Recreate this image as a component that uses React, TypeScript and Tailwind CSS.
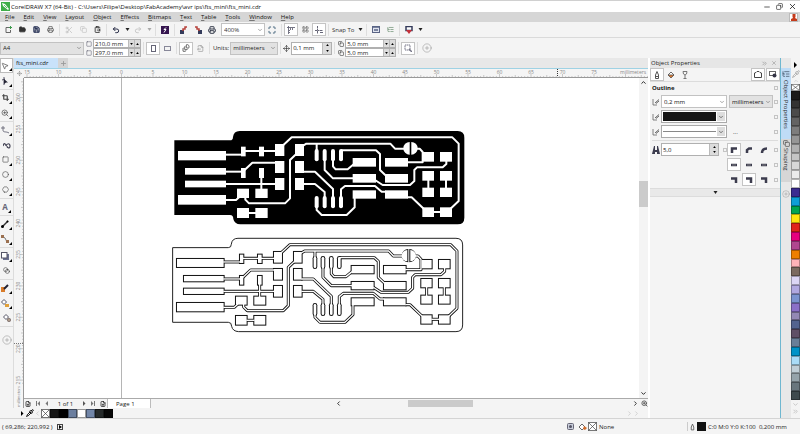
import type { ReactNode } from 'react';
import clsx from 'clsx';
import {
  Blend,
  ChevronDown,
  ChevronRight,
  ChevronUp,
  ChevronsRight,
  Circle,
  CirclePlus,
  ClipboardPaste,
  Copy,
  Crop,
  FileOutput,
  FilePlus,
  FileStack,
  FolderOpen,
  Hexagon,
  LayoutGrid,
  ListTree,
  Maximize,
  Minus,
  MousePointer2,
  Move,
  PaintBucket,
  Pipette,
  Plus,
  Printer,
  Redo2,
  Save,
  Scissors,
  Square,
  Undo2,
  X,
  ZoomIn,
} from 'lucide-react';

const menus = ['File', 'Edit', 'View', 'Layout', 'Object', 'Effects', 'Bitmaps', 'Text', 'Table', 'Tools', 'Window', 'Help'];

const palette = [
  '#1a1a1a', '#333333', '#4b4b4b', '#636363', '#7d7d7d', '#969696', '#b0b0b0', '#c5c5c5', '#d8d8d8', '#ebebeb', '#ffffff',
  '#3b2c91', '#0e9fd8', '#00a551', '#fde60f', '#e0251b', '#e6007e', '#b0468f', '#ee7f00', '#ffb3b8', '#7b6a60', '#dcd6f5',
  '#b0a8e0', '#7b93cf', '#8a70c8', '#9388b5', '#53648f', '#5f4f66', '#6a7f98', '#0093c8', '#aadcf7', '#c0ced6', '#95a3aa',
  '#69767d', '#3f4a4d',
];

const docColors = ['#151515', '#000000', '#6c7f9f', '#ffffff', '#7286a8', '#262a2a', '#080808'];

// x, y, width, height
const pads = [
  [39, 93, 144, 28], [60, 144, 123, 20], [60, 182, 123, 20], [39, 225, 144, 29],
  [228, 80, 14, 29], [282, 80, 15, 29], [228, 144, 14, 30], [282, 144, 15, 30],
  [330, 72, 28, 36], [330, 123, 28, 36], [330, 174, 28, 36],
  [390, 72, 27, 36], [390, 123, 27, 36], [390, 174, 27, 36],
  [216, 206, 36, 28], [271, 206, 37, 28], [216, 264, 36, 30], [271, 264, 37, 30],
  [563, 114, 70, 26], [660, 114, 69, 26], [563, 162, 70, 26], [660, 162, 69, 26], [563, 211, 70, 25], [660, 211, 69, 25],
  [773, 96, 34, 29], [825, 96, 36, 29], [772, 153, 35, 29], [825, 153, 36, 29],
  [772, 203, 35, 28], [825, 203, 36, 28], [772, 262, 35, 29], [825, 262, 36, 29],
];

const pins = [
  [455, 87], [479, 87], [504, 87], [528, 87],
  [455, 228], [479, 228], [504, 228], [528, 228],
];

const tracks = [
  '180,104 232,104', '238,93 333,93', '180,155 231,155', '238,151 262,128 333,128', '180,192 333,192',
  '289,170 289,210', '180,240 213,240 224,230', '241,230 241,239 252,250 360,250 375,235 375,120 393,103',
  '249,279 274,279', '352,78 380,52 862,52 881,71 881,243 855,268',
  '413,78 424,71 676,71 690,86 720,86', '754,86 764,86 773,96 773,127 726,127', '455,71 455,95',
  '479,116 479,150 504,175 566,175', '504,116 504,139 512,148 548,148 566,133',
  '528,91 633,91 645,102 645,150 663,167', '414,155 450,155 504,207 504,235', '414,192 450,192 479,216 479,235',
  '455,255 455,270 470,285 545,285 569,262 569,233', '528,235 528,208 540,198 630,198 650,215 663,215',
  '630,180 653,195 735,195 748,183 748,150 756,142 833,142 844,132 844,122',
  '726,232 740,232 776,266', '790,179 790,206', '843,179 843,206', '804,276 828,276',
];

const boardOutline =
  'M28 61H195Q204 61 204 51Q206 33 224 33H878Q898 33 898 53V293Q898 313 878 313H226Q208 312 205 297Q205 285 195 285H28Z';

// inset shrinks the pads, a negative one makes them larger
function Copper({ color, inset, trackWidth }: { color: string; inset: number; trackWidth: number }) {
  const jumper = 19 - inset;
  return (
    <g fill={color}>
      {pads.map(([x, y, w, h]) => (
        <rect key={`${x}-${y}`} x={x + inset} y={y + inset} width={w - inset * 2} height={h - inset * 2} />
      ))}
      {pins.map(([x, y]) => (
        <rect
          key={`${x}-${y}`}
          x={x - 6 + inset}
          y={y + inset}
          width={12 - inset * 2}
          height={37 - inset * 2}
          rx={6 - inset}
        />
      ))}
      <path d={`M${734 - inset} ${85 - jumper}v${jumper * 2}a${jumper} ${jumper} 0 0 1 0 ${-jumper * 2}Z`} />
      <path d={`M${739 + inset} ${85 - jumper}v${jumper * 2}a${jumper} ${jumper} 0 0 0 0 ${-jumper * 2}Z`} />
      <g fill="none" stroke={color} strokeWidth={trackWidth} strokeLinejoin="round">
        {tracks.map((points) => (
          <polyline key={points} points={points} />
        ))}
      </g>
    </g>
  );
}

function Drawing() {
  return (
    <svg className="block h-full w-full" role="img" aria-label="USB board drawing">
      <g transform="translate(-24 -78)">
        <line x1="121.5" y1="78" x2="121.5" y2="398" stroke="#b5b5b5" />
        <g transform="translate(165 120) scale(0.33333)">
          <path d={boardOutline} />
          <Copper color="#ffffff" inset={0} trackWidth={6} />
        </g>
        <g transform="translate(163.3 227.300) scale(0.33333)">
          <path d={boardOutline} fill="#fff" stroke="#222" strokeWidth="3" />
          <Copper color="#111111" inset={-1} trackWidth={9} />
          <Copper color="#ffffff" inset={2} trackWidth={4} />
        </g>
      </g>
    </svg>
  );
}

function HorizontalRuler() {
  const ticks = Array.from({ length: 200 }, (_, i) => i - 30);
  return (
    <svg className="h-full min-w-0 flex-1 bg-[#f5f5f5] font-['Open_Sans',sans-serif]" aria-hidden="true">
      <g transform="translate(-24 -69)">
        {ticks.map((i) => (
          <line
            key={i}
            x1={121.5 + i * 3.15}
            x2={121.5 + i * 3.15}
            y1={i % 10 === 0 ? 74 : i % 5 === 0 ? 75 : 76}
            y2="78"
            stroke="#b4b4b4"
            strokeWidth="0.700"
          />
        ))}
        {ticks.filter((i) => i % 10 === 0 && i <= 150).map((i) => (
          <text key={i} x={121.5 + i * 3.15} y="74" fontSize="5" fill="#888" textAnchor="middle">
            {Math.abs(i / 2)}
          </text>
        ))}
        <text x="620" y="74" fontSize="5" fill="#888">millimeters</text>
        <line x1="557.5" x2="557.5" y1="69" y2="78" stroke="#333" strokeDasharray="1 1" />
        <line x1="24" x2="2000" y1="77.5" y2="77.5" stroke="#999" />
      </g>
    </svg>
  );
}

function VerticalRuler() {
  const ticks = Array.from({ length: 97 }, (_, i) => i - 5);
  return (
    <svg className="h-full w-[10px] shrink-0 bg-[#f5f5f5] font-['Open_Sans',sans-serif]" aria-hidden="true">
      <g transform="translate(-14 -78)">
        {ticks.map((i) => (
          <line
            key={i}
            y1={97.5 + i * 3.14}
            y2={97.5 + i * 3.14}
            x1={i % 10 === 0 ? 20 : i % 5 === 0 ? 21 : 22}
            x2="24"
            stroke="#b4b4b4"
            strokeWidth="0.700"
          />
        ))}
        {ticks.filter((i) => i % 10 === 0 && i >= 0).map((i) => (
          <text key={i} transform={`translate(20 ${97.5 + i * 3.14}) rotate(-90)`} fontSize="5" fill="#888" textAnchor="middle">
            {260 - i / 2}
          </text>
        ))}
        <text transform="translate(20 407) rotate(-90)" fontSize="4" fill="#888">millimeters</text>
        <line x1="14" x2="24" y1="343.5" y2="343.5" stroke="#777" strokeDasharray="1 1" />
        <line x1="23.5" x2="23.5" y1="78" y2="2000" stroke="#999" />
      </g>
    </svg>
  );
}

function Divider() {
  return <span className="mx-[2px] h-3 w-px shrink-0 bg-[#dedede]" />;
}

function Tool({ label, children, active }: { label: string; children: ReactNode; active?: boolean }) {
  return (
    <button
      aria-label={label}
      className={clsx(
        'flex h-[13px] w-[14px] shrink-0 items-center justify-center',
        active && 'border border-[#c4c4c4] bg-white',
      )}
    >
      {children}
    </button>
  );
}

function Caret({ faded }: { faded?: boolean }) {
  return (
    <span className="flex w-2 shrink-0 justify-center">
      <svg width="5" height="3" viewBox="0 0 5 3"><path d="M0.500 0H4.500L2.500 3Z" fill={faded ? '#aaa' : '#222'} /></svg>
    </span>
  );
}

function Dropdown({ label, value, className }: { label: string; value: string; className: string }) {
  return (
    <span className={clsx('flex h-[13px] shrink-0 items-center border border-[#c2c2c2]', className)}>
      <select aria-label={label} defaultValue={value} className="h-full min-w-0 flex-1 appearance-none pl-[2px] outline-none">
        <option>{value}</option>
      </select>
      <ChevronDown size={6} className="mr-px shrink-0 text-[#555]" />
    </span>
  );
}

function Spin({ label, value, className, wide }: { label: string; value: string; className: string; wide?: boolean }) {
  return (
    <span className={clsx('flex shrink-0 border border-[#b0b0b0] bg-white', className)}>
      <input aria-label={label} defaultValue={value} className="min-w-0 flex-1 pl-px outline-none" />
      <span className={clsx('flex bg-[#dcdcdc]', wide ? 'w-[9px] flex-col' : 'w-3')}>
        <button aria-label={`${label} down`} className="flex flex-1 items-center justify-center border-l border-[#bbb]">
          <svg width="3" height="2" viewBox="0 0 4 3"><path d={wide ? 'M0 3H4L2 0Z' : 'M0 0H4L2 3Z'} /></svg>
        </button>
        <button aria-label={`${label} up`} className="flex flex-1 items-center justify-center border-l border-[#bbb]">
          <svg width="3" height="2" viewBox="0 0 4 3"><path d={wide ? 'M0 0H4L2 3Z' : 'M0 3H4L2 0Z'} /></svg>
        </button>
      </span>
    </span>
  );
}

function TitleBar() {
  return (
    <header className="flex h-3 shrink-0 items-center border-t border-[#d0d0d0] bg-white">
      <svg width="9" height="9" viewBox="0 0 9 9" className="ml-px shrink-0">
        <rect width="9" height="9" fill="#3fae49" />
        <path d="M1 1L4 2L8 7L7 8L2 4Z" fill="#fff" />
        <path d="M3 3L6 6" stroke="#3fae49" strokeWidth="0.800" />
      </svg>
      <h1 className="ml-px flex-1 truncate">
        CorelDRAW X7 (64-Bit) - C:\Users\Filipe\Desktop\FabAcademy\avr ips\fts_mini\fts_mini.cdr
      </h1>
      <div className="flex items-center gap-[5px] pr-[3px]">
        <button aria-label="Minimize"><Minus size={8} /></button>
        <button aria-label="Restore"><Copy size={7} className="rotate-90" /></button>
        <button aria-label="Close"><X size={9} /></button>
      </div>
    </header>
  );
}

function MenuBar() {
  return (
    <nav className="flex h-[10px] shrink-0 items-center gap-px bg-[#d6d6d6] pl-px">
      {menus.map((menu) => (
        <button key={menu} className="px-1">
          <span className="underline decoration-[#777]">{menu[0]}</span>
          {menu.slice(1)}
        </button>
      ))}
      <button aria-label="Account" className="mr-[2px] ml-auto flex h-[9px] w-[9px] justify-center border border-[#bbb] bg-white">
        <svg width="6" height="7" viewBox="0 0 6 7"><path d="M1.500 0H4.500V3L4 4L6 5V7H0V5L2 4L1.500 3Z" fill="#c53b1c" /></svg>
      </button>
    </nav>
  );
}

function StandardBar() {
  return (
    <div className="flex h-[15px] shrink-0 items-center bg-[#f4f4f4] pl-px text-[#333]">
      <Tool label="New">
        <svg width="7" height="7" viewBox="0 0 7 7" fill="none"><path d="M4 1.500H1V6.500H5.500V4" stroke="#666" /><path d="M5.500 0V3M4 1.500H7" stroke="#3c9a4c" /></svg>
      </Tool>
      <Tool label="Open"><FolderOpen size={7} fill="#333" strokeWidth={3} /></Tool>
      <Tool label="Save"><Save size={7} className="text-[#2b3558]" strokeWidth={4} /></Tool>
      <Tool label="Print"><Printer size={7} /></Tool>
      <Divider />
      <Tool label="Cut"><Scissors size={8} className="text-[#bbb]" /></Tool>
      <Tool label="Copy"><Copy size={7} className="text-[#bbb]" /></Tool>
      <Tool label="Paste"><ClipboardPaste size={7} strokeWidth={3} /></Tool>
      <Divider />
      <Tool label="Undo"><Undo2 size={8} strokeWidth={3} className="text-[#262b45]" /></Tool>
      <Caret />
      <Tool label="Redo"><Redo2 size={8} className="text-[#b5b5b5]" /></Tool>
      <Caret faded />
      <Divider />
      <Tool label="Search content">
        <svg width="8" height="8" viewBox="0 0 8 8">
          <rect width="8" height="8" fill="#35154f" />
          <path d="M5 1.500L3 3.500H5L3 6.500" stroke="#fff" fill="none" />
        </svg>
      </Tool>
      <Divider />
      <Tool label="Import">
        <svg width="8" height="8" viewBox="0 0 8 8"><path d="M0 4H4V8H0Z" fill="#343b5b" /><path d="M7 1H5V3H3V5" stroke="#b5403a" strokeWidth="1.500" fill="none" /></svg>
      </Tool>
      <Tool label="Export">
        <svg width="8" height="8" viewBox="0 0 8 8"><path d="M4 4H8V8H4Z" fill="#343b5b" /><path d="M1 1H3V3H5V5" stroke="#b5403a" strokeWidth="1.500" fill="none" /></svg>
      </Tool>
      <Tool label="Publish to PDF"><Printer size={8} strokeWidth={3} className="text-[#3b4050]" /></Tool>
      <Dropdown label="Zoom level" value="400%" className="ml-[2px] w-11 bg-white" />
      <Tool label="Full-screen preview"><Maximize size={8} strokeWidth={3} className="text-[#42637b]" /></Tool>
      <Divider />
      <Tool label="Show rulers" active>
        <svg width="8" height="8" viewBox="0 0 8 8" fill="none" stroke="#667"><path d="M0 1.500H8M1.500 0V8M3.500 2V4M5.500 2V4M2 4.500H3M2 6.500H3" strokeWidth="0.900" /></svg>
      </Tool>
      <Tool label="Show grid"><LayoutGrid size={7} className="text-[#555]" /></Tool>
      <Tool label="Show guidelines" active>
        <svg width="8" height="8" viewBox="0 0 8 8" fill="none" stroke="#667"><path d="M2.500 0V8M0 4.500H8" strokeDasharray="2 0.500" /><path d="M5 6.500H8" /></svg>
      </Tool>
      <Divider />
      <button className="ml-px flex items-center gap-[2px] whitespace-nowrap">Snap To<Caret /></button>
      <Divider />
      <Tool label="Options">
        <svg width="8" height="7" viewBox="0 0 8 7"><rect x="0.500" y="0.500" width="7" height="6" fill="#dfe3ee" stroke="#5a6485" /><path d="M0 1H8M2 4H6" stroke="#5a6485" strokeWidth="1.500" /></svg>
      </Tool>
      <Tool label="Object manager"><ListTree size={7} className="text-[#4d7a57]" /></Tool>
      <Divider />
      <Tool label="Launcher">
        <svg width="8" height="8" viewBox="0 0 8 8"><rect x="1" y="0.500" width="6" height="4" fill="#fff" stroke="#343b5b" strokeWidth="1.500" /><path d="M1 4H7L4 8Z" fill="#c5303a" /></svg>
      </Tool>
      <Caret />
    </div>
  );
}

function PropertyBar() {
  return (
    <div className="flex h-[21px] shrink-0 items-center border-t border-[#dadada] bg-[#f4f4f4] text-[#222]">
      <Dropdown label="Page size" value="A4" className="w-[84px] bg-[#e2e2e2]" />
      <div className="ml-[2px] flex flex-col gap-[3px] text-[#556]">
        <Square size={6} />
        <Square size={6} />
      </div>
      <div className="ml-px flex flex-col">
        <Spin label="Page width" value="210,0 mm" className="h-[9px] w-12" />
        <Spin label="Page height" value="297,0 mm" className="h-[9px] w-12" />
      </div>
      <Divider />
      <Tool label="Portrait" active><span className="h-[7px] w-[5px] border border-[#667]" /></Tool>
      <Tool label="Landscape"><span className="h-[5px] w-[7px] border border-[#889]" /></Tool>
      <Divider />
      <Tool label="All pages" active><FileStack size={8} /></Tool>
      <Tool label="Current page"><FileOutput size={7} className="text-[#888]" /></Tool>
      <Divider />
      <span className="ml-px">Units:</span>
      <Dropdown label="Units" value="millimeters" className="ml-px w-12 bg-[#e2e2e2]" />
      <Divider />
      <Move size={7} className="shrink-0" />
      <Spin label="Nudge distance" value="0,1 mm" className="ml-px h-[13px] w-[41px]" wide />
      <Divider />
      <div className="ml-px flex flex-col gap-[3px]">
        <Copy size={6} />
        <Copy size={6} />
      </div>
      <div className="ml-px flex flex-col">
        <Spin label="Duplicate distance x" value="5,0 mm" className="h-[9px] w-[51px]" />
        <Spin label="Duplicate distance y" value="5,0 mm" className="h-[9px] w-[51px]" />
      </div>
      <Divider />
      <Tool label="Treat as filled" active>
        <svg width="8" height="8" viewBox="0 0 8 8" fill="none" stroke="#778"><rect x="1" y="1" width="5" height="5" strokeDasharray="1.500 0.500" /><path d="M5 5L8 8" strokeWidth="1.500" /></svg>
      </Tool>
      <Divider />
      <Tool label="Customize"><CirclePlus size={10} strokeWidth={1} className="text-[#777]" /></Tool>
    </div>
  );
}

type ToolItem = { label: string; icon: ReactNode; single?: boolean };

const toolGroups: ToolItem[][] = [
  [
    { label: 'Pick', icon: <MousePointer2 size={8} /> },
    {
      label: 'Shape',
      icon: <svg width="8" height="8" viewBox="0 0 8 8"><path d="M3 0V8M1 3L4 2" stroke="#556" fill="none" /><path d="M3 2L7 5.500H5L3 7Z" fill="#223" /></svg>,
    },
  ],
  [
    { label: 'Crop', icon: <Crop size={7} strokeWidth={4} /> },
    { label: 'Zoom', icon: <ZoomIn size={8} /> },
  ],
  [
    {
      label: 'Freehand',
      icon: <svg width="8" height="8" viewBox="0 0 8 8" fill="none" stroke="#667"><path d="M0 2H4M2 0V4M2 4C2 7 5 5 8 7" strokeWidth="0.900" /></svg>,
    },
    {
      label: 'Artistic media',
      single: true,
      icon: <svg width="8" height="8" viewBox="0 0 8 8" fill="none" stroke="#445"><path d="M0 5C1 1 3 3 3 5M3 5C4 2 7 2 7 5S4 7 4 5" strokeWidth="1.200" /></svg>,
    },
    { label: 'Rectangle', icon: <Square size={7} /> },
    { label: 'Ellipse', icon: <Circle size={7} /> },
    { label: 'Polygon', icon: <Hexagon size={7} className="rotate-90" /> },
  ],
  [{ label: 'Text', icon: <span className="text-[8px] font-bold text-[#667]">A</span> }],
  [
    {
      label: 'Dimension',
      icon: <svg width="8" height="8" viewBox="0 0 8 8"><path d="M1 7L7 1" stroke="#333" strokeWidth="1.500" /><circle cx="1.500" cy="6.500" r="1.500" /><circle cx="6.500" cy="1.500" r="1" /></svg>,
    },
    {
      label: 'Connector',
      icon: <svg width="8" height="8" viewBox="0 0 8 8"><path d="M1.500 1.500L4 3L6 7" stroke="#777" fill="none" /><path d="M0 0H3V3H0ZM5 5H8V8H5Z" fill="#9b7050" /></svg>,
    },
  ],
  [
    {
      label: 'Drop shadow',
      icon: <svg width="8" height="8" viewBox="0 0 8 8"><path d="M2 2H8V8H2Z" fill="#6b7190" /><rect x="0.500" y="0.500" width="5.500" height="5.500" fill="#fff" stroke="#556" /></svg>,
    },
    { label: 'Transparency', single: true, icon: <Blend size={7} /> },
  ],
  [
    {
      label: 'Eyedropper',
      icon: <svg width="8" height="8" viewBox="0 0 8 8"><path d="M0 3H4V8H0Z" fill="#d87b2a" /><path d="M3 5L7 1" stroke="#223" strokeWidth="2" /></svg>,
    },
    {
      label: 'Interactive fill',
      icon: <svg width="8" height="8" viewBox="0 0 8 8"><path d="M0.500 3L3 0.500L5.500 3L3 5.500Z" fill="#fff" stroke="#556" /><path d="M4 5H8V8H4Z" fill="#e0a03a" /></svg>,
    },
    {
      label: 'Smart fill',
      single: true,
      icon: <svg width="8" height="8" viewBox="0 0 8 8"><path d="M0.500 3L3 0.500L5.500 3L3 5.500Z" fill="#fff" stroke="#556" /><circle cx="6" cy="6" r="1.700" fill="#a98" stroke="#655" strokeWidth="0.600" /></svg>,
    },
  ],
];

function Toolbox() {
  return (
    <aside className="flex w-[14px] shrink-0 flex-col items-center border-r border-[#dcdcdc] bg-[#f4f4f4] text-[#444]">
      {toolGroups.map((group, g) => (
        <div key={g} className="flex w-full flex-col border-b border-[#dcdcdc] pb-px">
          {group.map((tool) => (
            <button
              key={tool.label}
              aria-label={tool.label}
              className={clsx(
                'flex h-[15px] w-full items-center justify-center',
                tool.label === 'Pick' && 'border border-[#bbb] bg-white',
              )}
            >
              {tool.icon}
              {!tool.single && (
                <svg width="3" height="3" viewBox="0 0 3 3" className="mb-px shrink-0 self-end">
                  <path d="M3 0V3H0Z" />
                </svg>
              )}
            </button>
          ))}
        </div>
      ))}
      <button aria-label="Add tools" className="mt-2">
        <CirclePlus size={10} strokeWidth={1} className="text-[#777]" />
      </button>
    </aside>
  );
}

function PageBar() {
  return (
    <div className="flex h-[10px] shrink-0 items-center border-t border-[#aaa] bg-[#f4f4f4] text-[#222]">
      <div className="flex w-[83px] shrink-0 items-center justify-between px-px">
        <button aria-label="Add page before"><FilePlus size={6} strokeWidth={3} /></button>
        <button aria-label="First page" className="flex text-[#777]">
          <svg width="5" height="5" viewBox="0 0 5 5"><path d="M0 0H1V5H0ZM4 0V5L1.500 2.500Z" fill="currentColor" /></svg>
        </button>
        <button aria-label="Previous page" className="flex">
          <svg width="4" height="5" viewBox="0 0 4 5"><path d="M3 0V5L0.500 2.500Z" fill="#777" /></svg>
        </button>
        <span className="px-1">1 of 1</span>
        <button aria-label="Next page" className="flex">
          <svg width="4" height="5" viewBox="0 0 4 5"><path d="M1 0V5L3.500 2.500Z" fill="#555" /></svg>
        </button>
        <button aria-label="Last page" className="flex text-[#777]">
          <svg width="5" height="5" viewBox="0 0 5 5"><path d="M4 0H5V5H4ZM1 0V5L3.500 2.500Z" fill="currentColor" /></svg>
        </button>
        <button aria-label="Add page after"><FilePlus size={6} strokeWidth={3} /></button>
      </div>
      <button className="h-full w-11 shrink-0 border-x border-[#bbb] bg-white pl-2 text-left">Page 1</button>
      <div className="ml-auto flex h-full w-[313px] items-center">
        <button aria-label="Scroll left"><ChevronRight size={7} strokeWidth={3} className="rotate-180" /></button>
        <div className="flex h-full flex-1">
          <span className="flex-[66]" />
          <span className="my-px flex-[64] bg-[#cbcbcb]" />
          <span className="flex-[158]" />
        </div>
        <button aria-label="Scroll right"><ChevronRight size={7} strokeWidth={3} /></button>
        <button aria-label="Navigator" className="ml-[2px]"><ZoomIn size={7} strokeWidth={3} className="text-[#555]" /></button>
      </div>
    </div>
  );
}

function Document() {
  return (
    <section className="flex min-w-0 flex-1 flex-col">
      <div className="flex h-[10px] shrink-0 bg-[#e8e8e8]">
        <button className="w-11 bg-[#c9e2fa] pl-[2px] text-left whitespace-nowrap">fts_mini.cdr</button>
        <button aria-label="New document" className="flex w-[10px] items-center justify-center bg-[#d4d4d4] text-[#999]">
          <Plus size={7} strokeWidth={3} />
        </button>
      </div>
      <div className="flex h-[10px] shrink-0 border-t border-[#9fd2e4]">
        <span className="flex w-[10px] items-center justify-center bg-[#f5f5f5] text-[#777]">
          <Move size={5} />
        </span>
        <HorizontalRuler />
      </div>
      <div className="flex min-h-0 flex-1">
        <VerticalRuler />
        <div className="flex min-w-0 flex-1 flex-col">
          <div className="flex min-h-0 flex-1">
            <div className="min-w-0 flex-1 bg-white">
              <Drawing />
            </div>
            <div className="flex w-[9px] shrink-0 flex-col items-center bg-[#f4f4f4]">
              <button aria-label="Scroll up" className="flex h-[9px] items-center"><ChevronUp size={7} strokeWidth={3} /></button>
              <div className="flex w-full flex-1 flex-col">
                <span className="flex-[94]" />
                <span className="flex-[26] bg-[#cbcbcb]" />
                <span className="flex-[182]" />
              </div>
              <button aria-label="Scroll down" className="flex h-[9px] items-center"><ChevronDown size={7} strokeWidth={3} /></button>
            </div>
          </div>
          <PageBar />
        </div>
      </div>
    </section>
  );
}

function NoColor({ className }: { className: string }) {
  return (
    <svg viewBox="0 0 9 9" preserveAspectRatio="none" className={className}>
      <rect x="0.500" y="0.500" width="8" height="8" fill="#fff" stroke="#777" />
      <path d="M0.500 0.500L8.500 8.500M8.500 0.500L0.500 8.500" stroke="#444" strokeWidth="0.700" />
    </svg>
  );
}

function DocumentPalette() {
  return (
    <div className="flex h-[10px] shrink-0 items-center bg-[#f4f4f4] pl-5">
      <svg width="4" height="5" viewBox="0 0 4 5"><path d="M1 0V5L3.500 2.500Z" /></svg>
      <Pipette size={8} strokeWidth={3} className="ml-[2px]" />
      <ChevronRight size={7} className="rotate-180 text-[#bbb]" />
      <NoColor className="h-[9px] w-[9px]" />
      {docColors.map((color) => (
        <button key={color} aria-label={color} className="h-[9px] w-[9px] border border-black/40" style={{ backgroundColor: color }} />
      ))}
      <span className="ml-auto flex pr-2 text-[#bbb]">
        <ChevronRight size={7} />
        <ChevronRight size={7} />
      </span>
    </div>
  );
}

function Lock({ className = 'ml-auto' }: { className?: string }) {
  return <span className={clsx('h-1 w-1 shrink-0 border border-[#c4c4c4]', className)} />;
}

function PenIcon() {
  return (
    <svg width="8" height="8" viewBox="0 0 8 8" className="mr-px shrink-0" fill="none" stroke="#666">
      <path d="M1 1V7H5" strokeWidth="0.800" />
      <path d="M3 5L7 1.500M4 5.500L7 3" />
    </svg>
  );
}

const joins = [
  { label: 'Corner', paths: ['M2 7V2.500H7', 'M2 7V4L4 2.500H7', 'M2 7C2 4 4 2.500 7 2.500'] },
  { label: 'Cap', paths: ['M1 4H7', 'M1 4H7', 'M1 4H7'] },
  { label: 'Position', paths: ['M1 2.500H6V7', 'M1 2.500H6V7', 'M1 2.500H6V7'] },
];

function JoinRow({ row, active }: { row: number; active: number }) {
  return (
    <div className="ml-auto flex items-center gap-px">
      {joins[row].paths.map((d, i) => (
        <Tool key={i} label={`${joins[row].label} ${i + 1}`} active={i === active}>
          <svg width="8" height="8" viewBox="0 0 8 8" fill="none">
            <path d={d} stroke="#3c3c4e" strokeWidth="2.500" />
            {row === 1 && <path d="M2 4H6" stroke="#aaa" strokeWidth="0.600" />}
          </svg>
        </Tool>
      ))}
      <Lock className="ml-[2px]" />
    </div>
  );
}

function ObjectProperties() {
  return (
    <section className="ml-[2px] flex w-[130px] shrink-0 flex-col bg-[#f4f4f4]">
      <div className="flex h-[10px] shrink-0 items-center bg-[#e6e6e6] pl-px">
        <h2 className="flex-1 text-[#222]">Object Properties</h2>
        <button aria-label="Collapse docker"><ChevronsRight size={7} className="text-[#888]" /></button>
        <button aria-label="Close docker" className="mx-[3px]"><X size={6} className="text-[#888]" /></button>
      </div>
      <div className="flex h-[14px] shrink-0 items-center border-b border-[#dcdcdc]">
        <Tool label="Outline" active>
          <svg width="6" height="8" viewBox="0 0 6 8" fill="none" stroke="#555"><path d="M3 0.500L1.500 4V7.500H4.500V4ZM1.500 5.500H4.500" /></svg>
        </Tool>
        <Tool label="Fill">
          <svg width="8" height="8" viewBox="0 0 8 8"><path d="M1 4L4 1L7 4L4 7Z" fill="#d9762b" stroke="#555" strokeWidth="0.800" /><path d="M4 1L1 4H7Z" fill="#fff" stroke="#555" strokeWidth="0.800" /></svg>
        </Tool>
        <Tool label="Transparency">
          <svg width="8" height="8" viewBox="0 0 8 8" fill="none" stroke="#777"><path d="M2 0.500H6L5.500 3L4 4L2.500 3ZM4 4V7.500M2.500 7.500H5.500" /></svg>
        </Tool>
        <span className="ml-auto flex gap-px">
          <Tool label="Styles" active>
            <svg width="8" height="7" viewBox="0 0 8 7" fill="none" stroke="#444"><path d="M0.500 2L2 1.500L3 0.500H5L6 1.500L7.500 2V6.500H0.500Z" /></svg>
          </Tool>
          <Tool label="Scroll mode" active>
            <svg width="8" height="7" viewBox="0 0 8 7"><rect x="0.500" y="0.500" width="6" height="4" fill="#fff" stroke="#666" /><circle cx="5.500" cy="4.500" r="2" fill="#334" /></svg>
          </Tool>
        </span>
      </div>
      <div className="flex h-3 items-center px-[2px]">
        <h3 className="font-bold">Outline</h3>
        <Lock />
      </div>
      <div className="flex flex-col gap-[2px] px-[2px] pt-px">
        <div className="flex h-[13px] items-center">
          <PenIcon />
          <Dropdown label="Outline width" value="0,2 mm" className="w-[66px] bg-white" />
          <Dropdown label="Outline units" value="millimeters" className="ml-[2px] w-11 bg-[#e2e2e2]" />
          <Lock />
        </div>
        <div className="flex h-[13px] items-center">
          <PenIcon />
          <button aria-label="Outline color" className="flex h-[13px] w-[66px] items-center border border-[#aaa] bg-white p-px">
            <span className="h-full flex-1 bg-[#151515]" />
            <span className="ml-px flex h-full w-2 items-center justify-center bg-[#ddd]"><ChevronDown size={6} /></span>
          </button>
          <Lock />
        </div>
        <div className="flex h-[13px] items-center">
          <PenIcon />
          <button aria-label="Line style" className="flex h-[13px] w-[66px] items-center border border-[#aaa] bg-white p-px">
            <span className="h-px flex-1 bg-[#888]" />
            <span className="ml-px flex h-full w-2 items-center justify-center bg-[#ddd]"><ChevronDown size={6} /></span>
          </button>
          <button className="ml-[6px]">...</button>
          <Lock />
        </div>
      </div>
      <div className="mx-[2px] mt-[2px] flex flex-col gap-[2px] border-t border-[#dcdcdc] pt-[2px]">
        <div className="flex h-[13px] items-center">
          <svg width="8" height="8" viewBox="0 0 8 8" className="mr-px shrink-0"><path d="M2 0H3V8H0ZM5 0H6L8 8H5ZM3 4H5V6H3Z" fill="#3c3c4e" /></svg>
          <Spin label="Miter limit" value="5,0" className="h-[13px] w-[58px]" wide />
          <Lock className="ml-1" />
          <JoinRow row={0} active={0} />
        </div>
        <div className="flex h-[13px] items-center">
          <JoinRow row={1} active={0} />
        </div>
        <div className="flex h-[13px] items-center">
          <JoinRow row={2} active={1} />
        </div>
      </div>
      <button aria-label="More options" className="mt-[2px] flex h-[9px] items-center justify-center border-y border-[#dcdcdc] bg-[#e9e9e9]">
        <Caret />
      </button>
    </section>
  );
}

function DockerTabs() {
  return (
    <aside className="flex w-[11px] shrink-0 flex-col items-center border-l border-[#6fb7d0] bg-[#e8e8e8] pt-[10px] text-[#333]">
      <button className="flex h-[71px] w-full flex-col items-center gap-[2px] bg-[#bfdcf6] pt-[2px]">
        <ListTree size={8} className="shrink-0 text-[#345]" />
        <span className="leading-none whitespace-nowrap [writing-mode:vertical-rl]">Object Properties</span>
      </button>
      <button className="flex h-[43px] w-full flex-col items-center gap-px bg-[#d6d6d6] pt-px">
        <Copy size={7} className="shrink-0" />
        <span className="leading-none whitespace-nowrap [writing-mode:vertical-rl]">Shaping</span>
      </button>
      <button aria-label="Quick customize" className="mt-2"><CirclePlus size={8} strokeWidth={1} className="text-[#777]" /></button>
    </aside>
  );
}

function ColorPalette() {
  return (
    <aside className="flex w-[9px] shrink-0 flex-col items-center bg-[#f4f4f4]">
      <svg width="5" height="6" viewBox="0 0 5 6" className="mt-1 shrink-0"><path d="M1 0V6L4 3Z" /></svg>
      <Pipette size={8} className="mt-[2px] shrink-0 text-[#999]" />
      <ChevronUp size={6} className="shrink-0 text-[#bbb]" />
      <div className="flex min-h-0 w-full flex-1 flex-col">
        <NoColor className="min-h-0 w-full flex-1" />
        {palette.map((color) => (
          <button key={color} aria-label={color} className="min-h-0 w-full flex-1 border border-black/30" style={{ backgroundColor: color }} />
        ))}
      </div>
      <ChevronDown size={7} className="mt-px shrink-0 text-[#aaa]" />
      <ChevronsRight size={7} className="mb-[3px] shrink-0 text-[#aaa]" />
    </aside>
  );
}

function StatusBar() {
  return (
    <footer className="flex h-4 shrink-0 items-center border-t border-[#d4d4d4] bg-[#f4f4f4] pl-[2px] text-[#222]">
      <span className="w-[55px] whitespace-pre">( 69,286; 220,992 )</span>
      <button aria-label="Play" className="flex h-[6px] w-[6px] items-center justify-center border border-[#444]">
        <svg width="3" height="4" viewBox="0 0 3 4"><path d="M0 0V4L3 2Z" /></svg>
      </button>
      <div className="ml-auto flex w-[121px] items-center border-r border-[#ccc]">
        <svg width="7" height="7" viewBox="0 0 7 7"><rect x="0.500" y="0.500" width="6" height="6" rx="1" fill="#c9cedb" stroke="#667" /><circle cx="3.500" cy="3.500" r="1.500" fill="#556" /></svg>
        <svg width="8" height="8" viewBox="0 0 8 8" className="ml-[5px]"><path d="M0 4L3 1L6 4L3 7Z" fill="#fff" stroke="#444" strokeWidth="0.800" /><path d="M5 3L8 5L6 7L4 6Z" fill="#d06a28" /></svg>
        <NoColor className="ml-px h-[9px] w-[9px]" />
        <span className="ml-[2px]">None</span>
      </div>
      <div className="flex w-28 items-center pl-[2px]">
        <svg width="5" height="8" viewBox="0 0 6 8" fill="none" stroke="#555"><path d="M3 0.500L1.500 4V7.500H4.500V4Z" /></svg>
        <span className="mx-[2px] h-[9px] w-[9px] bg-[#111]" />
        <span className="whitespace-pre">C:0 M:0 Y:0 K:100  0,200 mm</span>
      </div>
    </footer>
  );
}

export default function App() {
  return (
    <div className="flex h-screen flex-col overflow-hidden bg-white font-['Open_Sans','Noto_Sans',sans-serif] text-[6px] leading-[8px] text-[#111]">
      <TitleBar />
      <MenuBar />
      <StandardBar />
      <PropertyBar />
      <main className="flex min-h-0 flex-1">
        <div className="flex min-w-0 flex-1 flex-col">
          <div className="flex min-h-0 flex-1">
            <Toolbox />
            <Document />
          </div>
          <DocumentPalette />
        </div>
        <ObjectProperties />
        <DockerTabs />
        <ColorPalette />
      </main>
      <StatusBar />
    </div>
  );
}
